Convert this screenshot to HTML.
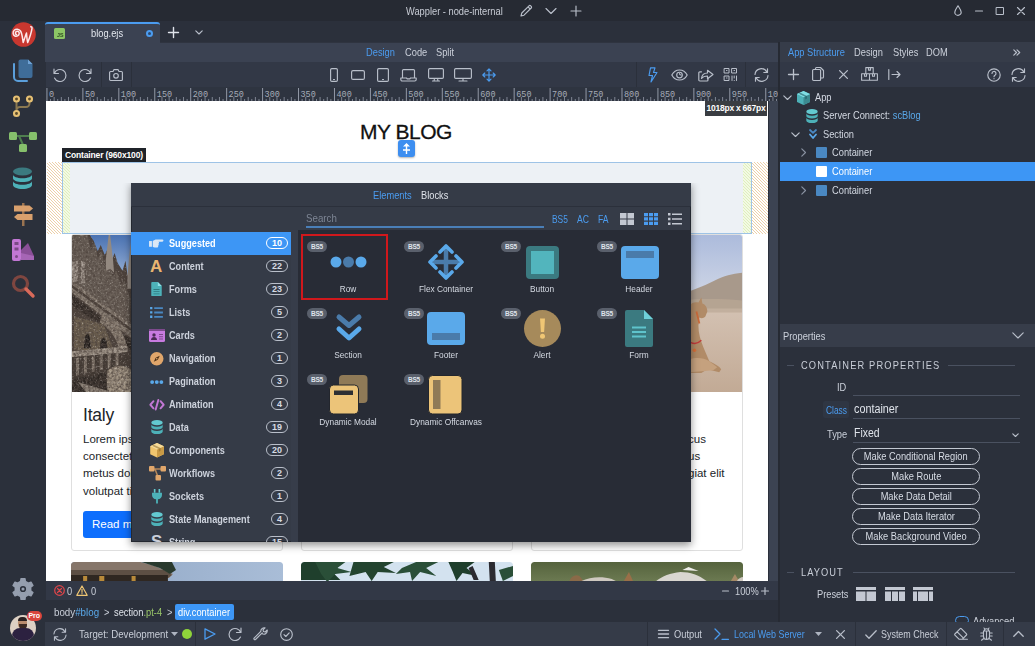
<!DOCTYPE html>
<html lang="en">
<head>
<meta charset="utf-8">
<title>Wappler - node-internal</title>
<style>
*{box-sizing:border-box;margin:0;padding:0}
html,body{width:1035px;height:646px;overflow:hidden;background:#2b303b}
body{position:relative;font-family:"Liberation Sans",sans-serif;font-size:10.500px;letter-spacing:0;color:#cbd0da}
.abs{position:absolute}
svg{display:block;overflow:visible}
.ic{position:absolute;fill:none;stroke:#b9bfca;stroke-width:1.150;stroke-linecap:round;stroke-linejoin:round}
.t{position:absolute;white-space:nowrap;line-height:14px;transform:scaleX(.885);transform-origin:0 50%}
/* frame */
#titlebar{left:0;top:0;width:1035px;height:21px;background:#262a33}
#sidebar{left:0;top:22px;width:45px;height:624px;background:#2b303b}
#tabbar{left:45px;top:22px;width:990px;height:20px;background:#2b303b}
#tab{z-index:1;left:45px;top:22px;width:115px;height:24px;background:#3b4252;border-top:2px solid #4b9cf0;border-radius:3px 3px 0 0}
#viewbar{left:45px;top:42px;width:734px;height:20px;background:#3b4252;border-top:1px solid #2f3440}
#toolbar{left:45px;top:62px;width:734px;height:25px;background:#323846}
#ruler{left:45px;top:87px;width:734px;height:14px;background:#2e3440;overflow:hidden}
#canvas{left:45px;top:101px;width:723px;height:480px;background:#fff;overflow:hidden}
#vscroll{left:768px;top:101px;width:10px;height:480px;background:#3c4352;border-left:1px solid #2b303b}
#split{left:778px;top:42px;width:2px;height:580px;background:#262a33}
#statusbar{left:45px;top:581px;width:734px;height:19px;background:#323846}
#crumbs{left:45px;top:600px;width:734px;height:22px;background:#2b303b}
#bottombar{left:45px;top:622px;width:990px;height:24px;background:#353b48}
#rtabs{left:780px;top:42px;width:255px;height:20px;background:#363c49}
#rtools{left:780px;top:62px;width:255px;height:25px;background:#323846}
#rtree{left:780px;top:87px;width:255px;height:238px;background:#2b303b}
#rprophead{left:780px;top:324px;width:255px;height:23px;background:#373d4a}
#rprops{left:780px;top:347px;width:255px;height:275px;background:#2b303b;overflow:hidden}

/* canvas */
#canvas{color:#212529;letter-spacing:0}
.card{position:absolute;width:212px;background:#fff;border:1px solid #dfdfdf;border-radius:3px;overflow:hidden}
.card .img{position:absolute;left:0;top:0;width:210px;height:157px}
.card h5{position:absolute;left:11px;top:170px;font-size:17.500px;font-weight:400;line-height:21px;letter-spacing:-.2px}
.card p{position:absolute;left:11px;top:196px;width:195px;font-size:11.500px;line-height:17.200px;color:#212529}
.card .btn{position:absolute;left:11px;top:276px;height:27px;padding:0 9px;border-radius:3px;background:#0d6efd;color:#fff;font-size:11.500px;line-height:27px}
.hatch-o{position:absolute;background:repeating-linear-gradient(45deg,#fff 0,#fff 1.400px,#edd0a8 1.400px,#edd0a8 2.100px)}
.hatch-g{position:absolute;background:repeating-linear-gradient(45deg,#f3f9e4 0,#f3f9e4 1.400px,#def0bd 1.400px,#def0bd 2.100px)}

/* popup */
#popup{left:131px;top:182px;width:560px;height:360px;background:#353b47;box-shadow:0 3px 8px rgba(0,0,0,.45);overflow:hidden;clip-path:inset(1px -20px -20px -20px);outline:1px solid #242830;outline-offset:-1px}
#popup .li{position:absolute;left:0;width:160px;height:23px}
#popup .li .lab{position:absolute;left:38px;top:3.500px;line-height:14px;font-weight:bold;color:#cdd2dc;white-space:nowrap;transform:scaleX(.87);transform-origin:0 50%}
#popup .li .bdg{position:absolute;right:3px;top:5px;height:12px;min-width:17px;padding:0 5px;border:1px solid #b9bfca;border-radius:6px;font-size:9px;line-height:10px;font-weight:bold;text-align:center;color:#d5dae3;letter-spacing:0}
#popup .li svg{position:absolute}
#popup .li.sel{background:#3d96f5}
#popup .li.sel .lab,#popup .li.sel .bdg{color:#fff;border-color:#fff}
.bs5{position:absolute;width:20px;height:11px;border-radius:6px;background:#5a606c;color:#dfe3ea;font-size:6.500px;line-height:11px;text-align:center;font-weight:bold;letter-spacing:-.2px}
.glab{position:absolute;width:98px;text-align:center;line-height:13px;color:#d5dae3;white-space:nowrap;font-size:9.500px;transform:scaleX(.875)}

/* right panel */
.tr{position:absolute;left:0;width:255px;height:19px}
.tr .t{top:2px;color:#d3d8e2}
.pbtn{position:absolute;left:72px;width:128px;height:17px;border:1px solid #c3c8d2;border-radius:9px;text-align:center;line-height:15px;color:#d8dde6;font-size:10.500px;white-space:nowrap}
.pbtn span{display:inline-block;transform:scaleX(.885)}
.hr{position:absolute;height:1px;background:#4a5160}
</style>
</head>
<body>
<div id="titlebar" class="abs">
<div class="t" style="left:406px;top:4px;color:#c9cdd6">Wappler - node-internal</div>
<svg class="ic" style="left:519px;top:4px" width="14" height="14" viewBox="0 0 14 14"><path d="M2 12l.8-3L10 1.8a1.2 1.2 0 0 1 1.7 0l.5.5a1.2 1.2 0 0 1 0 1.7L5 11.2z M9 2.8l2.2 2.2"/></svg>
<svg class="ic" style="left:545px;top:7px" width="12" height="8" viewBox="0 0 12 8"><path d="M1 1.5l5 5 5-5"/></svg>
<svg class="ic" style="left:570px;top:5px" width="12" height="12" viewBox="0 0 12 12"><path d="M6 1v10M1 6h10"/></svg>
<svg class="ic" style="left:954px;top:5px" width="8" height="11" viewBox="0 0 8 11"><path d="M4 .8C5.2 3 7.2 5 7.2 7.2a3.2 3.2 0 0 1-6.400 0C.8 5 2.800 3 4 .8z"/></svg>
<svg class="ic" style="left:975px;top:10px" width="8" height="2" viewBox="0 0 8 2"><path d="M.5 1h7"/></svg>
<svg class="ic" style="left:996px;top:7px;stroke-width:1" width="8" height="8" viewBox="0 0 8 8"><rect x=".5" y=".5" width="7" height="7"/></svg>
<svg class="ic" style="left:1017px;top:7px" width="8" height="8" viewBox="0 0 8 8"><path d="M.5.500l7 7M7.500.5l-7 7"/></svg>
</div>
<div id="sidebar" class="abs">
<!-- logo -->
<svg class="abs" style="left:11px;top:0" width="25" height="25" viewBox="0 0 25 25"><circle cx="12.500" cy="12.500" r="12.300" fill="#c8372f"/><path d="M5.500 12.500c-1.200-.3-1.500-2-.3-2.800 1.500-1 3.300.2 3 2-.3 2-2.500 3.200-4.300 2.300C1.800 13 1.500 10 3.200 8.300 5 6.600 8 7 9.500 9c1.500 2 2 7 2.700 11.500C13.500 17 14.500 13.500 15.500 11c.2 3 .5 7 1.200 9.500C18.500 16 20.500 10 21 6.300c.1-1-.5-1.800-1.200-1.600" fill="none" stroke="#fde8ea" stroke-width="1.500" stroke-linecap="round" stroke-linejoin="round"/></svg>
<!-- files -->
<svg class="abs" style="left:12px;top:37px" width="22" height="24" viewBox="0 0 22 24"><path d="M2 5v13a4 4 0 0 0 4 4h9" fill="none" stroke="#5b9fdb" stroke-width="2" stroke-linecap="round"/><path d="M6.500 2.500a2 2 0 0 1 2-2H16l4.500 4.500V17a2 2 0 0 1-2 2h-10a2 2 0 0 1-2-2z" fill="#3f6d99"/><path d="M16 .5l4.500 4.500H16z" fill="#6fa3d6"/></svg>
<!-- git -->
<svg class="abs" style="left:12px;top:72px" width="22" height="24" viewBox="0 0 22 24"><path d="M4.500 8v10M17.500 8v1.500a3.500 3.500 0 0 1-3.500 3.500H8a3.500 3.500 0 0 0-3.500 3.500" fill="none" stroke="#8b7850" stroke-width="2"/><circle cx="4.500" cy="5" r="2.500" fill="#5a4a2a" stroke="#e6c074" stroke-width="2.100"/><circle cx="17.500" cy="5" r="2.500" fill="#5a4a2a" stroke="#e6c074" stroke-width="2.100"/><circle cx="4.500" cy="19.500" r="2.500" fill="#5a4a2a" stroke="#e6c074" stroke-width="2.100"/></svg>
<!-- workflow -->
<svg class="abs" style="left:9px;top:108px" width="28" height="24" viewBox="0 0 28 24"><path d="M5 6h18M10 6l5 11" fill="none" stroke="#4f7f4f" stroke-width="2"/><rect x="0" y="2" width="8" height="8" rx="1.500" fill="#86c06c"/><rect x="20" y="2" width="8" height="8" rx="1.500" fill="#86c06c"/><rect x="10" y="14" width="8" height="8" rx="1.500" fill="#86c06c"/></svg>
<!-- database -->
<svg class="abs" style="left:12px;top:145px" width="21" height="23" viewBox="0 0 21 23"><ellipse cx="10.500" cy="4.500" rx="9.500" ry="4" fill="#3b7a80"/><path d="M1 7.500c0 2 4 3.800 9.500 3.800S20 9.500 20 7.500v3.800c0 2-4 3.800-9.500 3.800S1 13.300 1 11.300z" fill="#4db1b8"/><path d="M1 14c0 2 4 3.800 9.500 3.800S20 16 20 14v4c0 2-4 4-9.500 4S1 20 1 18z" fill="#4db1b8"/></svg>
<!-- signpost -->
<svg class="abs" style="left:12px;top:181px" width="23" height="23" viewBox="0 0 23 23"><rect x="10" y="0" width="2.500" height="23" fill="#9a7350"/><path d="M2 2.500h15.500L21 5.500l-3.500 3H2z" fill="#d9a06d"/><path d="M20.500 11h-15L2 14l3.500 3h15z" fill="#d9a06d"/></svg>
<!-- theme -->
<svg class="abs" style="left:11px;top:216px" width="24" height="24" viewBox="0 0 24 24"><path d="M10 12L17 5l6 13v4H10z" fill="#8a4f97"/><path d="M10 15l13 3v4H10z" fill="#a665b5"/><rect x="1" y="1" width="9" height="22" rx="2" fill="#c277d4"/><rect x="3.500" y="4" width="4" height="3" fill="#7a4a86"/><rect x="3.500" y="9.500" width="4" height="3" fill="#7a4a86"/><circle cx="5.500" cy="18.500" r="1.500" fill="#7a4a86"/></svg>
<!-- search -->
<svg class="abs" style="left:11px;top:252px" width="24" height="24" viewBox="0 0 24 24"><circle cx="9.500" cy="9.500" r="7" fill="none" stroke="#7f4640" stroke-width="3.200"/><path d="M15 15l7 7" stroke="#d96a5a" stroke-width="3.400" stroke-linecap="round"/></svg>
<!-- gear -->
<svg class="abs" style="left:12px;top:556px" width="22" height="22" viewBox="0 0 24 24"><path fill="#959eae" stroke="#959eae" stroke-width="1.600" stroke-linejoin="round" fill-rule="evenodd" d="M9.46 3.78L9.87 0.70L14.13 0.70L14.54 3.78L17.84 5.69L20.72 4.51L22.85 8.19L20.39 10.09L20.39 13.91L22.85 15.81L20.72 19.49L17.84 18.31L14.54 20.22L14.13 23.30L9.87 23.30L9.46 20.22L6.16 18.31L3.28 19.49L1.15 15.81L3.61 13.91L3.61 10.09L1.15 8.19L3.28 4.51L6.16 5.69zM12 7.800a4.200 4.200 0 1 0 0 8.400 4.200 4.200 0 0 0 0-8.400z"/><circle cx="12" cy="12" r="1.700" fill="#959eae"/></svg>
<!-- avatar -->
<div class="abs" style="left:10px;top:593px;width:26px;height:26px;border-radius:13px;background:#ddd0c4;overflow:hidden">
<div class="abs" style="left:8px;top:3px;width:9px;height:11px;border-radius:4.500px;background:#b98c6e"></div>
<div class="abs" style="left:8px;top:2px;width:9px;height:4px;border-radius:4px 4px 0 0;background:#2a2020"></div>
<div class="abs" style="left:8.500px;top:9px;width:8px;height:5px;border-radius:0 0 4px 4px;background:#3a2a24"></div>
<div class="abs" style="left:2px;top:13px;width:22px;height:14px;border-radius:8px 8px 0 0;background:#2c2140"></div>
</div>
<div class="abs" style="left:27px;top:589px;width:14.500px;height:10px;border-radius:5px;background:#d9453c;color:#fff;font-size:7px;line-height:10px;text-align:center;font-weight:bold">Pro</div>
</div>
<div id="tabbar" class="abs"></div>
<div id="tab" class="abs">
<div class="abs" style="left:9px;top:4px;width:11px;height:11px;border-radius:1.500px;background:#8cc665"></div>
<div class="t" style="left:12px;top:8px;font-size:6px;line-height:7px;color:#2d4a1f;font-weight:bold">JS</div>
<div class="t" style="left:46px;top:2px;color:#e3e7ee">blog.ejs</div>
<div class="abs" style="left:100.500px;top:5.500px;width:7px;height:7px;border-radius:4px;border:2px solid #4b9cf0;background:#2d4a70"></div>
</div>
<svg class="ic" style="left:168px;top:27px;stroke:#dfe3ea;stroke-width:1.400" width="11" height="11" viewBox="0 0 11 11"><path d="M5.500.5v10M.5 5.500h10"/></svg>
<svg class="ic" style="left:195px;top:30px" width="8" height="5" viewBox="0 0 8 5"><path d="M.8.800l3.200 3.200 3.200-3.200"/></svg>
<div id="viewbar" class="abs">
<div class="t" style="left:321px;top:2px;color:#4b9cf0">Design</div>
<div class="t" style="left:360px;top:2px">Code</div>
<div class="t" style="left:391px;top:2px">Split</div>
</div>
<div id="toolbar" class="abs">
<div class="abs" style="left:56px;top:0;width:1px;height:25px;background:#2b303b"></div>
<div class="abs" style="left:86px;top:0;width:1px;height:25px;background:#2b303b"></div>
<div class="abs" style="left:591px;top:0;width:1px;height:25px;background:#2b303b"></div>
<div class="abs" style="left:700px;top:0;width:1px;height:25px;background:#2b303b"></div>
<!-- undo -->
<svg class="ic" style="left:8px;top:6px" width="14" height="14" viewBox="0 0 14 14"><path d="M1 1v4.500h4.500M1.300 5.500A6 6 0 1 1 1.500 10"/></svg>
<!-- redo -->
<svg class="ic" style="left:33px;top:6px" width="14" height="14" viewBox="0 0 14 14"><path d="M13 1v4.500H8.500M12.700 5.500A6 6 0 1 0 12.500 10"/></svg>
<!-- camera -->
<svg class="ic" style="left:64px;top:7px" width="14" height="12" viewBox="0 0 14 12"><path d="M.6 3.500a1 1 0 0 1 1-1H4l1-1.900h4l1 1.900h2.400a1 1 0 0 1 1 1v7a1 1 0 0 1-1 1H1.600a1 1 0 0 1-1-1z"/><circle cx="7" cy="6.800" r="2.300"/></svg>
<!-- phone -->
<svg class="ic" style="left:285px;top:6px" width="8" height="14" viewBox="0 0 8 14"><rect x=".6" y=".6" width="6.800" height="12.800" rx="1.200"/><path d="M3.500 11.500h1"/></svg>
<!-- phone landscape -->
<svg class="ic" style="left:306px;top:8px" width="14" height="10" viewBox="0 0 14 10"><rect x=".6" y=".6" width="12.800" height="8.800" rx="1.500"/></svg>
<!-- tablet -->
<svg class="ic" style="left:332px;top:6px" width="12" height="14" viewBox="0 0 12 14"><rect x=".6" y=".6" width="10.800" height="12.800" rx="1.200"/><path d="M5.500 11.500h1"/></svg>
<!-- laptop -->
<svg class="ic" style="left:355px;top:7px" width="17" height="13" viewBox="0 0 17 13"><path d="M2.500 9V1.600a1 1 0 0 1 1-1h10a1 1 0 0 1 1 1V9M.8 9h5.700l.7.800h2.600l.7-.800h5.700v1.500a1.500 1.500 0 0 1-1.500 1.500H2.300A1.500 1.500 0 0 1 .8 10.500z"/></svg>
<!-- desktop -->
<svg class="ic" style="left:383px;top:6px" width="16" height="14" viewBox="0 0 16 14"><rect x=".6" y=".6" width="14.800" height="9.800" rx="1.200"/><path d="M6.500 10.500l-.5 2.500M9.500 10.500l.5 2.500M4.500 13h7"/></svg>
<!-- wide -->
<svg class="ic" style="left:409px;top:6px" width="18" height="14" viewBox="0 0 18 14"><rect x=".6" y=".6" width="16.800" height="9.800" rx="1.200"/><path d="M9 10.500V13M5 13h8"/></svg>
<!-- move -->
<svg class="ic" style="left:437px;top:6px;stroke:#4b9cf0" width="14" height="14" viewBox="0 0 14 14"><path d="M7 .8v12.400M.8 7h12.400M5 2.800l2-2 2 2M5 11.200l2 2 2-2M2.800 5l-2 2 2 2M11.200 5l2 2-2 2"/></svg>
<!-- bolt -->
<svg class="ic" style="left:603px;top:5px;stroke:#4b9cf0" width="10" height="16" viewBox="0 0 10 16"><path d="M2.500.8h4.500L5.500 5.500h3.500L3 15l1.500-6.500H1z"/></svg>
<!-- eye -->
<svg class="ic" style="left:626px;top:7px" width="17" height="12" viewBox="0 0 17 12"><path d="M.8 6C2.500 2.800 5.200 1 8.500 1s6 1.800 7.700 5c-1.700 3.200-4.400 5-7.700 5S2.500 9.200.8 6z"/><circle cx="8.500" cy="6" r="2.800"/><path d="M8.500 4.500a1.500 1.500 0 0 0 1.500 1.500"/></svg>
<!-- share -->
<svg class="ic" style="left:653px;top:6px" width="16" height="14" viewBox="0 0 16 14"><path d="M10 10.500v1.500a1 1 0 0 1-1 1H1.800a1 1 0 0 1-1-1V4.800a1 1 0 0 1 1-1H3.500"/><path d="M3.500 10.500C3.800 7 6 5 9.500 5V2.200L15 6.500l-5.500 4.300V8C7 8 5 8.500 3.500 10.500z"/></svg>
<!-- qr -->
<svg class="ic" style="left:679px;top:6px;stroke-width:1" width="13" height="13" viewBox="0 0 13 13"><rect x=".5" y=".5" width="4.500" height="4.500"/><rect x="8" y=".5" width="4.500" height="4.500"/><rect x=".5" y="8" width="4.500" height="4.500"/><path d="M2.500 2.500h.5M10 2.500h.5M2.500 10h.5M8 8v4.500M10.200 8v2M12.500 8v4.500M10.200 12.500h.100"/></svg>
<!-- refresh -->
<svg class="ic" style="left:709px;top:6px" width="15" height="14" viewBox="0 0 15 14"><path d="M1 6.500A6.300 6.300 0 0 1 12.800 4M13.500.8V4.500H9.800M14 7.500A6.300 6.300 0 0 1 2.200 10M1.500 13.200V9.500h3.700"/></svg>
</div>
<div id="ruler" class="abs">
<svg class="abs" style="left:0;top:0" width="734" height="14" viewBox="0 0 734 14">
<path d="M1.95 1v13M37.89 1v13M73.83 1v13M109.77 1v13M145.71 1v13M181.65 1v13M217.59 1v13M253.53 1v13M289.47 1v13M325.41 1v13M361.35 1v13M397.29 1v13M433.23 1v13M469.17 1v13M505.11 1v13M541.05 1v13M576.99 1v13M612.93 1v13M648.87 1v13M684.81 1v13M720.75 1v13" stroke="#9399a6" stroke-width="1" fill="none"/>
<path d="M5.54 12v2M9.14 10v4M12.73 12v2M16.33 10v4M19.92 12v2M23.51 10v4M27.11 12v2M30.70 10v4M34.30 12v2M41.48 12v2M45.08 10v4M48.67 12v2M52.27 10v4M55.86 12v2M59.45 10v4M63.05 12v2M66.64 10v4M70.24 12v2M77.42 12v2M81.02 10v4M84.61 12v2M88.21 10v4M91.80 12v2M95.39 10v4M98.99 12v2M102.58 10v4M106.18 12v2M113.36 12v2M116.96 10v4M120.55 12v2M124.15 10v4M127.74 12v2M131.33 10v4M134.93 12v2M138.52 10v4M142.12 12v2M149.30 12v2M152.90 10v4M156.49 12v2M160.09 10v4M163.68 12v2M167.27 10v4M170.87 12v2M174.46 10v4M178.06 12v2M185.24 12v2M188.84 10v4M192.43 12v2M196.03 10v4M199.62 12v2M203.21 10v4M206.81 12v2M210.40 10v4M214.00 12v2M221.18 12v2M224.78 10v4M228.37 12v2M231.97 10v4M235.56 12v2M239.15 10v4M242.75 12v2M246.34 10v4M249.94 12v2M257.12 12v2M260.72 10v4M264.31 12v2M267.91 10v4M271.50 12v2M275.09 10v4M278.69 12v2M282.28 10v4M285.88 12v2M293.06 12v2M296.66 10v4M300.25 12v2M303.85 10v4M307.44 12v2M311.03 10v4M314.63 12v2M318.22 10v4M321.82 12v2M329.00 12v2M332.60 10v4M336.19 12v2M339.79 10v4M343.38 12v2M346.97 10v4M350.57 12v2M354.16 10v4M357.76 12v2M364.94 12v2M368.54 10v4M372.13 12v2M375.73 10v4M379.32 12v2M382.91 10v4M386.51 12v2M390.10 10v4M393.70 12v2M400.88 12v2M404.48 10v4M408.07 12v2M411.67 10v4M415.26 12v2M418.85 10v4M422.45 12v2M426.04 10v4M429.64 12v2M436.82 12v2M440.42 10v4M444.01 12v2M447.61 10v4M451.20 12v2M454.79 10v4M458.39 12v2M461.98 10v4M465.58 12v2M472.76 12v2M476.36 10v4M479.95 12v2M483.55 10v4M487.14 12v2M490.73 10v4M494.33 12v2M497.92 10v4M501.52 12v2M508.70 12v2M512.30 10v4M515.89 12v2M519.49 10v4M523.08 12v2M526.67 10v4M530.27 12v2M533.86 10v4M537.46 12v2M544.64 12v2M548.24 10v4M551.83 12v2M555.43 10v4M559.02 12v2M562.61 10v4M566.21 12v2M569.80 10v4M573.40 12v2M580.58 12v2M584.18 10v4M587.77 12v2M591.37 10v4M594.96 12v2M598.55 10v4M602.15 12v2M605.74 10v4M609.34 12v2M616.52 12v2M620.12 10v4M623.71 12v2M627.31 10v4M630.90 12v2M634.49 10v4M638.09 12v2M641.68 10v4M645.28 12v2M652.46 12v2M656.06 10v4M659.65 12v2M663.25 10v4M666.84 12v2M670.43 10v4M674.03 12v2M677.62 10v4M681.22 12v2M688.40 12v2M692.00 10v4M695.59 12v2M699.19 10v4M702.78 12v2M706.37 10v4M709.97 12v2M713.56 10v4M717.16 12v2M724.34 12v2M727.94 10v4M731.53 12v2" stroke="#7f8592" stroke-width="1" fill="none"/>
<text x="4.0" y="9.500" font-family="Liberation Mono,monospace" font-size="8.500" letter-spacing="0" fill="#a5abb6">0</text>
<text x="39.9" y="9.500" font-family="Liberation Mono,monospace" font-size="8.500" letter-spacing="0" fill="#a5abb6">50</text>
<text x="75.8" y="9.500" font-family="Liberation Mono,monospace" font-size="8.500" letter-spacing="0" fill="#a5abb6">100</text>
<text x="111.8" y="9.500" font-family="Liberation Mono,monospace" font-size="8.500" letter-spacing="0" fill="#a5abb6">150</text>
<text x="147.7" y="9.500" font-family="Liberation Mono,monospace" font-size="8.500" letter-spacing="0" fill="#a5abb6">200</text>
<text x="183.6" y="9.500" font-family="Liberation Mono,monospace" font-size="8.500" letter-spacing="0" fill="#a5abb6">250</text>
<text x="219.6" y="9.500" font-family="Liberation Mono,monospace" font-size="8.500" letter-spacing="0" fill="#a5abb6">300</text>
<text x="255.5" y="9.500" font-family="Liberation Mono,monospace" font-size="8.500" letter-spacing="0" fill="#a5abb6">350</text>
<text x="291.5" y="9.500" font-family="Liberation Mono,monospace" font-size="8.500" letter-spacing="0" fill="#a5abb6">400</text>
<text x="327.4" y="9.500" font-family="Liberation Mono,monospace" font-size="8.500" letter-spacing="0" fill="#a5abb6">450</text>
<text x="363.3" y="9.500" font-family="Liberation Mono,monospace" font-size="8.500" letter-spacing="0" fill="#a5abb6">500</text>
<text x="399.3" y="9.500" font-family="Liberation Mono,monospace" font-size="8.500" letter-spacing="0" fill="#a5abb6">550</text>
<text x="435.2" y="9.500" font-family="Liberation Mono,monospace" font-size="8.500" letter-spacing="0" fill="#a5abb6">600</text>
<text x="471.2" y="9.500" font-family="Liberation Mono,monospace" font-size="8.500" letter-spacing="0" fill="#a5abb6">650</text>
<text x="507.1" y="9.500" font-family="Liberation Mono,monospace" font-size="8.500" letter-spacing="0" fill="#a5abb6">700</text>
<text x="543.1" y="9.500" font-family="Liberation Mono,monospace" font-size="8.500" letter-spacing="0" fill="#a5abb6">750</text>
<text x="579.0" y="9.500" font-family="Liberation Mono,monospace" font-size="8.500" letter-spacing="0" fill="#a5abb6">800</text>
<text x="614.9" y="9.500" font-family="Liberation Mono,monospace" font-size="8.500" letter-spacing="0" fill="#a5abb6">850</text>
<text x="650.9" y="9.500" font-family="Liberation Mono,monospace" font-size="8.500" letter-spacing="0" fill="#a5abb6">900</text>
<text x="686.8" y="9.500" font-family="Liberation Mono,monospace" font-size="8.500" letter-spacing="0" fill="#a5abb6">950</text>
<text x="722.8" y="9.500" font-family="Liberation Mono,monospace" font-size="8.500" letter-spacing="0" fill="#a5abb6">1000</text>
</svg></div>
<div id="canvas" class="abs">
<div class="t" style="transform:none;left:315px;top:19px;font-size:21px;line-height:24px;letter-spacing:-.5px;color:#111;-webkit-text-stroke:.3px #111">MY BLOG</div>
<!-- selected container -->
<div class="hatch-o" style="left:2px;top:61px;width:15px;height:72px"></div>
<div class="hatch-o" style="left:707px;top:61px;width:16px;height:72px"></div>
<div class="abs" style="left:17px;top:61px;width:690px;height:72px;background:#edf1f5;border:1px solid #9ec3e6"></div>
<div class="hatch-g" style="left:18px;top:62px;width:7px;height:70px"></div>
<div class="hatch-g" style="left:698px;top:62px;width:8px;height:70px"></div>
<div class="abs" style="left:17px;top:47px;width:84px;height:14px;background:#1f2329;color:#fff;font-weight:bold;font-size:8.500px;line-height:14px;letter-spacing:-.15px;padding-left:3px;white-space:nowrap">Container (960x100)</div>
<div class="abs" style="left:353px;top:39px;width:17px;height:17px;border-radius:3px;background:#3d8ef0;box-shadow:0 1px 2px rgba(0,0,0,.3)"><svg class="abs" style="left:4px;top:3px" width="9" height="11" viewBox="0 0 9 11"><path d="M4.500 0L8 3.500H1zM3.800 3h1.400v8H3.800zM1 6.300h7v1.400H1z" fill="#fff"/></svg></div>
<div class="abs" style="left:660px;top:0;width:62px;height:15px;background:#3a3d42;color:#fff;font-weight:bold;font-size:8.500px;line-height:15px;letter-spacing:-.25px;text-align:center;white-space:nowrap">1018px x 667px</div>
<!-- cards row 1 -->
<div class="card" style="left:26px;top:133px;height:317px">
<svg class="img" viewBox="0 0 212 158" preserveAspectRatio="none"><defs><linearGradient id="sky1" x1="0" y1="0" x2="0" y2="1"><stop offset="0" stop-color="#4a72b2"/><stop offset="1" stop-color="#a3bbdd"/></linearGradient><filter id="nz" x="0" y="0" width="100%" height="100%"><feTurbulence type="fractalNoise" baseFrequency=".42" numOctaves="2" seed="7"/><feColorMatrix values="0 0 0 0 .08  0 0 0 0 .06  0 0 0 0 .05  0 0 0 1.700 -.5"/></filter><filter id="nl" x="0" y="0" width="100%" height="100%"><feTurbulence type="fractalNoise" baseFrequency=".5" numOctaves="2" seed="3"/><feColorMatrix values="0 0 0 0 .85  0 0 0 0 .8  0 0 0 0 .74  0 0 0 1.200 -.68"/></filter></defs>
<rect width="212" height="158" fill="#4a403a"/>
<path d="M0 0h16l3 16 4-10 3 18 4-8 3 16 4-6 4 16 4-6 4 14 4-4 5 16v30L0 50z" fill="#6a6058"/>
<path d="M0 28l6-2v20l-6 2zM9 26l4 1v22l-4-1z" fill="#a39990"/>
<path d="M0 46l60 44v14L0 58z" fill="#8a7f74"/>
<path d="M0 50l60 44v3L0 53z" fill="#4a4039"/>
<path d="M0 60l60 46v10L40 96 0 72z" fill="#2f2824"/>
<path d="M2 82l30 8 10 26H2z" fill="#6d604f"/>
<path d="M30 80c14 6 24 18 26 36l-8 2c-2-14-10-24-20-30z" fill="#8a7e72"/>
<path d="M13 102l3-3 2 3 1 12h-7zM29 106l3-3 3 4 1 9h-8z" fill="#1f1b19"/>
<path d="M0 117l56-5v6L0 123z" fill="#a09589"/>
<path d="M0 123l56-5v18L0 146z" fill="#3f3731"/>
<path d="M4 124l3-1v18l-3 1zM12 123l3-1v17l-3 1zM20 122l3-1v16l-3 1zM28 121l3-1v15l-3 1zM36 120l3-1v14l-3 1zM44 119l3-1v13l-3 1z" fill="#8a7f74"/>
<path d="M36 136c8-6 18-6 24 0v22H34z" fill="#a29584"/>
<path d="M0 146l34-8 2 20H0z" fill="#2c2622"/>
<path d="M6 148l34 10H14z" fill="#8e8479"/>
<rect width="62" height="158" filter="url(#nz)"/>
<rect width="62" height="158" filter="url(#nl)"/>
<path d="M18 0h44v48l-6-8-2-14-3 10-5-8-3-10-3 8-4-12-3 6-4-10-3 6-4-10z" fill="url(#sky1)"/>
<path d="M34 26l3-26h1.500l3 26 1 12-4-4-4 2z" fill="#938980"/>
<path d="M56 40l3-32 2 32v14h-5z" fill="#938980"/>
<rect x="60" y="0" width="152" height="158" fill="#6a5f56"/>
</svg>
<h5>Italy</h5>
<p>Lorem ipsum dolor sit amet,<br>consectetur adipiscing elit. Sed<br>metus dolor, lacinia sed lacus<br>volutpat tincidunt.</p>
<div class="btn">Read more</div>
</div>
<div class="card" style="left:256px;top:133px;height:317px"></div>
<div class="card" style="left:486px;top:133px;height:317px">
<svg class="img" viewBox="0 0 212 158" preserveAspectRatio="none"><defs><linearGradient id="sky3" x1="0" y1="0" x2="0" y2="1"><stop offset="0" stop-color="#acbbdc"/><stop offset="1" stop-color="#cfd6e6"/></linearGradient><linearGradient id="snd" x1="0" y1="0" x2="0" y2="1"><stop offset="0" stop-color="#d6c5b7"/><stop offset="1" stop-color="#c2aa95"/></linearGradient></defs>
<rect width="212" height="62" fill="url(#sky3)"/>
<rect y="60" width="212" height="98" fill="url(#snd)"/>
<path d="M150 60c10-4 22-8 34-14 10-5 18-7 28-8v36h-62z" fill="#a8998b"/>
<path d="M150 66c20-2 40-2 62 0v12h-62z" fill="#bba896" opacity=".7"/>
<g transform="translate(0,7)"><path d="M159 64c2-3 6-4 9-3l3-5 1 6c3 1 5 4 5 8l-2 5c-2 2-4 2-6 1l-1 8c0 8 2 14 5 22l6 14c6 3 10 5 12 8l-2 3-12-3-6 4h-12z" fill="#b18b67"/>
<path d="M159 118c6-2 14-2 20 2l8 6-4 3-24 2z" fill="#c5a17e"/>
<path d="M166 70l3 12" stroke="#c96a3a" stroke-width="1.800" fill="none"/><path d="M160 101c4 2 8 1 11-2" stroke="#c23a3a" stroke-width="1.400" fill="none"/><circle cx="164" cy="109" r="1.800" fill="#d9703a"/></g>
</svg>
<div class="t" style="transform:none;left:156px;top:196px;font-size:11.500px;line-height:17.200px;color:#212529">cus<br>us<br>giat elit</div>
</div>
<!-- row 2 -->
<div class="card" style="left:26px;top:461px;height:100px;border:0"><svg class="img" style="width:212px" viewBox="0 0 210 157" preserveAspectRatio="none"><defs><linearGradient id="sk4" x1="0" y1="0" x2="1" y2="0"><stop offset="0" stop-color="#8fa6c5"/><stop offset="1" stop-color="#a9bdd7"/></linearGradient></defs><rect width="210" height="157" rx="3" fill="url(#sk4)"/><path d="M0 3a3 3 0 0 1 3-3h66l14 4 18 8-4 4H0z" fill="#86766a"/><path d="M0 8h92l8 5-4 3H0z" fill="#5d4f44"/><path d="M0 13h96v6H0z" fill="#2f2721"/><path d="M70 0h30l4 8-6 4-10-6z" fill="#2a3a2e"/><path d="M12 14h4v5h-4zM28 14h5v5h-5zM60 14h4v5h-4z" fill="#b98a3a"/></svg></div>
<div class="card" style="left:256px;top:461px;height:100px;border:0"><svg class="img" style="width:212px" viewBox="0 0 210 157" preserveAspectRatio="none"><rect width="210" height="157" rx="3" fill="#d3e2ef"/><path d="M0 3a3 3 0 0 1 3-3h22l12 6-6 4 8 8H0z" fill="#1f3f2c"/><path d="M14 0h30l-8 6 14 4-16 2-8 8-6-8z" fill="#2a4f38"/><path d="M52 0h40l-10 5 12 6-18-1-6 9-6-9-16 4z" fill="#23442f"/><path d="M100 6l14-6h22l-12 6 10 8-16-4-8 9-2-9-14 2z" fill="#2a4f38"/><path d="M146 0h26l-8 6 10 8-14-3-6 8-4-10z" fill="#1f3f2c"/><path d="M170 4l6 14h-5l-5-12zM186 0h6l1 19h-6z" fill="#2b2a30"/><path d="M196 8l14-4v10l-10 5z" fill="#2a4f38"/></svg></div>
<div class="card" style="left:486px;top:461px;height:100px;border:0"><svg class="img" style="width:212px" viewBox="0 0 210 157" preserveAspectRatio="none"><defs><linearGradient id="gr6" x1="0" y1="0" x2="0" y2="1"><stop offset="0" stop-color="#55633d"/><stop offset=".12" stop-color="#6b7951"/><stop offset="1" stop-color="#6b7951"/></linearGradient></defs><rect width="210" height="157" rx="3" fill="url(#gr6)"/><path d="M38 19c2-5 6-7 10-5l4 5z" fill="#8a6a48"/><path d="M50 19c8-4 20-5 30-2l4 2z" fill="#cfc9c0"/><path d="M92 19l5-9 4 9z" fill="#9a6f48"/><path d="M124 19c6-5 14-8 24-9 10 0 18 3 26 9z" fill="#d9d6d0"/><path d="M150 8l6-3 10 4z" fill="#efeeea"/><path d="M198 19l4-7 4 7z" fill="#a58a66"/><path d="M204 19c2-3 4-4 6-4v4z" fill="#cfc9c0"/></svg></div>
</div>
<div id="vscroll" class="abs"></div>
<div id="statusbar" class="abs">
<svg class="abs" style="left:9px;top:4px" width="11" height="11" viewBox="0 0 11 11"><circle cx="5.500" cy="5.500" r="4.800" fill="none" stroke="#e0454a" stroke-width="1.200"/><path d="M3.500 3.500l4 4M7.500 3.500l-4 4" stroke="#e0454a" stroke-width="1.200" stroke-linecap="round"/></svg>
<div class="t" style="left:22px;top:3px;color:#c9ced8">0</div>
<svg class="abs" style="left:31px;top:4px" width="12" height="11" viewBox="0 0 12 11"><path d="M6 1l5.200 9.300H.8z" fill="none" stroke="#f0c674" stroke-width="1.200" stroke-linejoin="round"/><path d="M6 4.300v3M6 8.600v.2" stroke="#f0c674" stroke-width="1.200" stroke-linecap="round"/></svg>
<div class="t" style="left:46px;top:3px;color:#c9ced8">0</div>
<svg class="ic" style="left:677px;top:9px" width="7" height="2" viewBox="0 0 7 2"><path d="M.5 1h6"/></svg>
<div class="t" style="left:690px;top:3px;color:#c9ced8">100%</div>
<svg class="ic" style="left:716px;top:6px" width="8" height="8" viewBox="0 0 8 8"><path d="M4 .5v7M.5 4h7"/></svg>
</div>
<div id="crumbs" class="abs">
<div class="t" style="left:9px;top:5px;color:#c9ced8;transform:scaleX(.93)">body<span style="color:#5aa9ea">#blog</span></div>
<div class="t" style="left:59px;top:5px;color:#c9ced8">&gt;</div>
<div class="t" style="left:69px;top:5px;color:#dfe3ea">section<span style="color:#9bc86a">.pt-4</span></div>
<div class="t" style="left:122px;top:5px;color:#c9ced8">&gt;</div>
<div class="abs" style="left:130px;top:4px;width:59px;height:16px;border-radius:2px;background:#3d96f5"></div>
<div class="t" style="left:133px;top:5px;color:#fff">div.container</div>
</div>
<div id="rtabs" class="abs">
<div class="t" style="left:8px;top:3px;color:#4b9cf0">App Structure</div>
<div class="t" style="left:74px;top:3px">Design</div>
<div class="t" style="left:113px;top:3px">Styles</div>
<div class="t" style="left:146px;top:3px">DOM</div>
<svg class="ic" style="left:233px;top:7px" width="7" height="7" viewBox="0 0 7 7"><path d="M.8.800L3.500 3.500.8 6.200M4 .8l2.700 2.700L4 6.200"/></svg>
</div>
<div id="rtools" class="abs">
<svg class="ic" style="left:8px;top:7px;stroke-width:1.300" width="11" height="11" viewBox="0 0 11 11"><path d="M5.500.5v10M.5 5.500h10"/></svg>
<svg class="ic" style="left:32px;top:5px" width="12" height="14" viewBox="0 0 12 14"><path d="M3.500 2.500v-1a1 1 0 0 1 1-1H8.500l3 3V10a1 1 0 0 1-1 1H8.500M.6 3.500a1 1 0 0 1 1-1h6a1 1 0 0 1 1 1v9a1 1 0 0 1-1 1h-6a1 1 0 0 1-1-1z"/></svg>
<svg class="ic" style="left:59px;top:8px;stroke-width:1.300" width="9" height="9" viewBox="0 0 9 9"><path d="M.6.600l7.800 7.800M8.400.6L.6 8.400"/></svg>
<svg class="ic" style="left:81px;top:5px;stroke-width:1.100" width="17" height="14" viewBox="0 0 17 14"><path d="M4.800.6h7.400v6.200H4.800zM.6 6.800h7.900v6.400H.6zM8.500 6.800h7.900v6.400H8.500zM7.500.6v2.500h2V.6M3.500 6.800v2.400h2V6.800M11.500 6.800v2.400h2V6.800"/></svg>
<svg class="ic" style="left:108px;top:7px" width="13" height="11" viewBox="0 0 13 11"><path d="M.8.600v9.800M4 5.500h8M9 2.500l3 3-3 3"/></svg>
<svg class="ic" style="left:207px;top:6px" width="14" height="14" viewBox="0 0 14 14"><circle cx="7" cy="7" r="6.200"/><path d="M5 5.500a2 2 0 1 1 3 1.700c-.7.400-1 .8-1 1.500M7 10.600v.1"/></svg>
<svg class="ic" style="left:231px;top:6px" width="15" height="14" viewBox="0 0 15 14"><path d="M1 6.500A6.300 6.300 0 0 1 12.800 4M13.500.8V4.500H9.800M14 7.500A6.300 6.300 0 0 1 2.200 10M1.500 13.200V9.500h3.700"/></svg>
</div>
<div id="rtree" class="abs">
<div class="tr" style="top:1px"><svg class="ic" style="left:3px;top:7px" width="9" height="6" viewBox="0 0 9 6"><path d="M.8.800l3.700 3.700L8.200.8"/></svg><svg class="abs" style="left:17px;top:3px" width="13" height="14" viewBox="0 0 15 16"><path d="M7.500 0L15 3.500v9L7.500 16 0 12.500v-9z" fill="#4db1b8"/><path d="M7.500 7.200L15 3.500v9L7.500 16z" fill="#3b8a90"/><path d="M7.500 0L15 3.500 7.500 7.200 0 3.500z" fill="#7fdde3"/><path d="M4 2l7.500 3.600v3l-2 1V6.700L2 3z" fill="#1f5a60" opacity=".6"/></svg><div class="t" style="left:35px">App</div></div>
<div class="tr" style="top:19px"><svg class="abs" style="left:26px;top:3px" width="12" height="14" viewBox="0 0 13 16"><ellipse cx="6.500" cy="3" rx="6.500" ry="3" fill="#63c9d0"/><path d="M0 4.800c0 1.500 2.800 2.800 6.500 2.800S13 6.300 13 4.800V8c0 1.500-2.800 2.800-6.500 2.800S0 9.500 0 8z" fill="#4db1b8"/><path d="M0 9.800c0 1.500 2.800 2.800 6.500 2.800S13 11.300 13 9.800V13c0 1.600-2.800 3-6.500 3S0 14.600 0 13z" fill="#4db1b8"/></svg><div class="t" style="left:43px">Server Connect: <span style="color:#5aa9ea">scBlog</span></div></div>
<div class="tr" style="top:38px"><svg class="ic" style="left:11px;top:7px" width="9" height="6" viewBox="0 0 9 6"><path d="M.8.800l3.700 3.700L8.200.8"/></svg><svg class="abs" style="left:29px;top:4px" width="8" height="11" viewBox="0 0 8 11"><path d="M1 1l3 2.800L7 1" fill="none" stroke="#4a88c2" stroke-width="1.800" stroke-linecap="round" stroke-linejoin="round"/><path d="M1 5.500l3 3.500 3-3.500" fill="none" stroke="#5aa9ea" stroke-width="1.800" stroke-linecap="round" stroke-linejoin="round"/></svg><div class="t" style="left:43px">Section</div></div>
<div class="tr" style="top:56px"><svg class="ic" style="left:21px;top:5px;stroke:#8a92a2" width="6" height="9" viewBox="0 0 6 9"><path d="M.8.800l3.700 3.700L.8 8.200"/></svg><div class="abs" style="left:36px;top:4px;width:11px;height:11px;border-radius:1px;background:#4a88c2"></div><div class="t" style="left:52px">Container</div></div>
<div class="tr" style="top:75px;background:#3d96f5"><div class="abs" style="left:36px;top:4px;width:11px;height:11px;border-radius:1px;background:#fff"></div><div class="t" style="left:52px;color:#fff">Container</div></div>
<div class="tr" style="top:94px"><svg class="ic" style="left:21px;top:5px;stroke:#8a92a2" width="6" height="9" viewBox="0 0 6 9"><path d="M.8.800l3.700 3.700L.8 8.200"/></svg><div class="abs" style="left:36px;top:4px;width:11px;height:11px;border-radius:1px;background:#4a88c2"></div><div class="t" style="left:52px">Container</div></div>
</div>
<div id="rprophead" class="abs">
<div class="t" style="left:3px;top:5px">Properties</div>
<svg class="ic" style="left:232px;top:8px" width="12" height="7" viewBox="0 0 12 7"><path d="M.8.800L6 6 11.200.8"/></svg>
</div>
<div id="rprops" class="abs">
<div class="hr" style="left:7px;top:18px;width:7px"></div>
<div class="t" style="left:21px;top:11px;font-size:10.500px;letter-spacing:1.300px;color:#c9ced8">CONTAINER PROPERTIES</div>
<div class="hr" style="left:168px;top:18px;width:67px"></div>
<div class="t" style="left:57px;top:33px">ID</div>
<div class="hr" style="left:73px;top:48px;width:167px"></div>
<div class="abs" style="left:43px;top:54px;width:26px;height:17px;border-radius:2px;background:#2f3643"></div>
<div class="t" style="left:46px;top:56px;color:#4b9cf0;transform:scaleX(.8)">Class</div>
<div class="t" style="left:74px;top:55px;font-size:12px;transform:scaleX(.9);color:#dfe3ea">container</div>
<div class="hr" style="left:73px;top:71px;width:167px"></div>
<div class="t" style="left:47px;top:80px">Type</div>
<div class="t" style="left:74px;top:79px;font-size:12px;transform:scaleX(.87);color:#dfe3ea">Fixed</div>
<svg class="ic" style="left:232px;top:86px" width="7" height="5" viewBox="0 0 7 5"><path d="M.8.800L3.500 3.500 6.200.8"/></svg>
<div class="hr" style="left:73px;top:95px;width:167px"></div>
<div class="pbtn" style="top:101px"><span>Make Conditional Region</span></div>
<div class="pbtn" style="top:121px"><span>Make Route</span></div>
<div class="pbtn" style="top:141px"><span>Make Data Detail</span></div>
<div class="pbtn" style="top:161px"><span>Make Data Iterator</span></div>
<div class="pbtn" style="top:181px"><span>Make Background Video</span></div>
<div class="hr" style="left:7px;top:225px;width:7px"></div>
<div class="t" style="left:21px;top:218px;font-size:10.500px;letter-spacing:1.150px;color:#c9ced8">LAYOUT</div>
<div class="hr" style="left:73px;top:225px;width:162px"></div>
<div class="t" style="left:37px;top:240px">Presets</div>
<svg class="abs" style="left:76px;top:240px" width="78" height="14" viewBox="0 0 78 14"><g fill="#c3c8d2"><path d="M0 0h20v3H0zM0 4.500h9.500V14H0zM10.500 4.500H20V14h-9.500z"/><path d="M29 0h20v3H29zM29 4.500h6V14h-6zM36 4.500h6V14h-6zM43 4.500h6V14h-6z"/><path d="M57 0h20v3H57zM57 4.500h4V14h-4zM62 4.500h10V14H62zM73 4.500h4V14h-4z"/></g></svg>
<div class="abs" style="left:175px;top:269px;width:14px;height:9px;border-radius:5px;border:1.500px solid #4b9cf0"></div>
<div class="t" style="left:193px;top:267px">Advanced</div>
</div>
<div id="split" class="abs"></div>
<div class="abs" style="left:45px;top:62px;width:1px;height:584px;background:#2b303b"></div>
<div id="bottombar" class="abs">
<svg class="ic" style="left:8px;top:6px" width="14" height="13" viewBox="0 0 15 14"><path d="M1 6.500A6.300 6.300 0 0 1 12.800 4M13.500.8V4.500H9.800M14 7.500A6.300 6.300 0 0 1 2.200 10M1.500 13.200V9.500h3.700"/></svg>
<div class="t" style="left:34px;top:5px;color:#c9ced8;transform:scaleX(.92)">Target: Development</div>
<svg class="abs" style="left:126px;top:10px" width="7" height="4" viewBox="0 0 7 4"><path d="M0 0h7L3.500 4z" fill="#aeb4c0"/></svg>
<div class="abs" style="left:137px;top:7px;width:10px;height:10px;border-radius:5px;background:#8fd43a"></div>
<div class="abs" style="left:150px;top:0;width:1px;height:24px;background:#2b303b"></div>
<svg class="ic" style="left:159px;top:6px;stroke:#4b9cf0;stroke-width:1.300" width="12" height="12" viewBox="0 0 12 12"><path d="M1 .8L11 6 1 11.200z"/></svg>
<svg class="ic" style="left:183px;top:5px" width="14" height="14" viewBox="0 0 14 14"><path d="M13 1v4.500H8.500M12.700 5.500A6 6 0 1 0 12.500 10"/></svg>
<svg class="ic" style="left:209px;top:5px" width="14" height="14" viewBox="0 0 14 14"><path d="M8.200 5.800L1.500 12.500a1 1 0 0 1-1.400-1.400L6.800 4.400A3.500 3.500 0 0 1 11 .8L9 2.800l.5 1.700 1.700.5 2-2a3.500 3.500 0 0 1-5 3.800z"/></svg>
<svg class="ic" style="left:235px;top:6px" width="13" height="13" viewBox="0 0 13 13"><circle cx="6.500" cy="6.500" r="5.800"/><path d="M4 6.700l1.800 1.800L9.200 4.800"/></svg>
<div class="abs" style="left:602px;top:0;width:1px;height:24px;background:#2b303b"></div>
<svg class="ic" style="left:613px;top:7px;stroke-width:1.400" width="11" height="10" viewBox="0 0 12 10"><path d="M.5 1h11M.5 5h11M.5 9h11"/></svg>
<div class="t" style="left:629px;top:5px;color:#c9ced8">Output</div>
<svg class="ic" style="left:669px;top:6px;stroke:#4b9cf0;stroke-width:1.300" width="15" height="12" viewBox="0 0 15 12"><path d="M1 1l5 5-5 5M8 11.300h6.500"/></svg>
<div class="t" style="left:689px;top:5px;color:#4b9cf0;transform:scaleX(.85)">Local Web Server</div>
<svg class="abs" style="left:770px;top:10px" width="7" height="4" viewBox="0 0 7 4"><path d="M0 0h7L3.500 4z" fill="#aeb4c0"/></svg>
<svg class="ic" style="left:791px;top:8px;stroke-width:1.300" width="9" height="9" viewBox="0 0 9 9"><path d="M.6.600l7.800 7.800M8.400.6L.6 8.400"/></svg>
<div class="abs" style="left:810px;top:0;width:1px;height:24px;background:#2b303b"></div>
<svg class="ic" style="left:820px;top:8px;stroke-width:1.300" width="12" height="9" viewBox="0 0 12 9"><path d="M.8 5l3.200 3.200L11.200.8"/></svg>
<div class="t" style="left:836px;top:5px;color:#c9ced8;transform:scaleX(.85)">System Check</div>
<div class="abs" style="left:901px;top:0;width:1px;height:24px;background:#2b303b"></div>
<svg class="ic" style="left:909px;top:6px" width="14" height="12" viewBox="0 0 14 12"><path d="M5 11.200L.9 7.100a.8.800 0 0 1 0-1.100L6.200.7a.8.800 0 0 1 1.100 0l5.200 5.200a.8.800 0 0 1 0 1.100L8.400 11.200zM3.200 3.800l5.500 5.500M8.400 11.200h5"/></svg>
<svg class="ic" style="left:935px;top:5px;stroke-width:1.100" width="13" height="14" viewBox="0 0 13 14"><path d="M4.200 4a2.300 2.300 0 0 1 4.600 0M3.500 4h6v5.500a3 3 0 0 1-6 0zM6.500 4v8.500M3.500 6H.8M3.500 9H.8M9.500 6h2.700M9.500 9h2.700M3.800 11.500L1.500 13.200M9.200 11.500l2.300 1.700M4 1l.8 1M9 1l-.8 1"/></svg>
<div class="abs" style="left:958px;top:0;width:1px;height:24px;background:#2b303b"></div>
<svg class="ic" style="left:968px;top:8px;stroke-width:1.300" width="11" height="7" viewBox="0 0 11 7"><path d="M.8 6.200L5.500 1.500l4.700 4.700"/></svg>
</div>
<div id="popup" class="abs">
<div class="abs" style="left:0;top:0;width:560px;height:25px;background:#353b47;border-bottom:1px solid #2b303b"></div>
<div class="t" style="left:242px;top:6px;color:#4b9cf0">Elements</div>
<div class="t" style="left:290px;top:6px;color:#dfe3ea">Blocks</div>
<div class="t" style="left:175px;top:29px;font-size:11px;color:#7d8594">Search</div>
<div class="abs" style="left:175px;top:44px;width:238px;height:2px;background:#4a7fb8"></div>
<div class="t" style="left:421px;top:30px;color:#4b9cf0;transform:scaleX(.8)">BS5</div>
<div class="t" style="left:446px;top:30px;color:#4b9cf0;transform:scaleX(.82)">AC</div>
<div class="t" style="left:467px;top:30px;color:#4b9cf0;transform:scaleX(.82)">FA</div>
<svg class="abs" style="left:489px;top:31px" width="14" height="12" viewBox="0 0 14 12"><path d="M0 0h6.500v5.500H0zM7.500 0H14v5.500H7.500zM0 6.500h6.500V12H0zM7.500 6.500H14V12H7.500z" fill="#c3c8d2"/></svg>
<svg class="abs" style="left:513px;top:31px" width="14" height="12" viewBox="0 0 14 12"><path d="M0 0h4v3.300H0zM5 0h4v3.300H5zM10 0h4v3.300h-4zM0 4.300h4v3.300H0zM5 4.300h4v3.300H5zM10 4.300h4v3.300h-4zM0 8.700h4V12H0zM5 8.700h4V12H5zM10 8.700h4V12h-4z" fill="#4b9cf0"/></svg>
<svg class="abs" style="left:537px;top:31px" width="14" height="12" viewBox="0 0 14 12"><path d="M0 0h2.500v2.500H0zM0 4.700h2.500v2.500H0zM0 9.400h2.500v2.500H0zM4 .5h10v1.600H4zM4 5.200h10v1.600H4zM4 9.900h10v1.600H4z" fill="#c3c8d2"/></svg>
<div class="abs" style="left:160px;top:48px;width:7px;height:312px;background:#373d4a"></div>
<div class="abs" style="left:167px;top:48px;width:393px;height:312px;background:#282c36"></div>
<div class="li sel" style="top:50px"><svg style="left:18px;top:7px" width="14" height="9" viewBox="0 0 17 11"><path d="M0 2.500h3.500v7H0z" fill="#dbe7f5"/><path d="M4.500 2.500c1.500-1.200 3-2 4.500-2h7.200a.9.900 0 0 1 0 2.800H10.500c1.200 0 1.800.5 1.800 1.300s-.5 1.200-1.200 1.300c.5.200.8.600.8 1.200s-.5 1.100-1.200 1.200c.3.200.5.500.5 1 0 .8-.7 1.200-1.500 1.200H7c-1 0-1.800-.4-2.500-1z" fill="#dbe7f5"/></svg><div class="lab">Suggested</div><div class="bdg">10</div></div>
<div class="li" style="top:73px"><div class="abs" style="left:19px;top:3px;font-size:17px;line-height:17px;font-weight:bold;color:#e9b571;letter-spacing:0">A</div><div class="lab">Content</div><div class="bdg">22</div></div>
<div class="li" style="top:96px"><svg style="left:20px;top:4px" width="11" height="14" viewBox="0 0 12 16"><path d="M0 1a1 1 0 0 1 1-1h6.500L12 4.500V15a1 1 0 0 1-1 1H1a1 1 0 0 1-1-1z" fill="#4db1b8"/><path d="M7.500 0L12 4.500H7.500z" fill="#8fe0e6"/><path d="M2.500 8h7v1h-7zM2.500 10.500h7v1h-7zM2.500 13h7v1h-7z" fill="#2f7a80"/></svg><div class="lab">Forms</div><div class="bdg">23</div></div>
<div class="li" style="top:119px"><svg style="left:19px;top:6px" width="13" height="11" viewBox="0 0 14 12"><path d="M0 0h2.500v2.500H0zM0 4.700h2.500v2.500H0zM0 9.400h2.500v2.500H0z" fill="#5aa9ea"/><path d="M4.500.3h9.500v2H4.500zM4.500 5h9.500v2H4.500zM4.500 9.700h9.500v2H4.500z" fill="#4a88c2"/></svg><div class="lab">Lists</div><div class="bdg">5</div></div>
<div class="li" style="top:142px"><svg style="left:18px;top:5px" width="16" height="13" viewBox="0 0 16 13"><rect width="16" height="13" rx="1.500" fill="#c87be0"/><rect y="0" width="16" height="2" fill="#7d4a8d"/><circle cx="5" cy="6" r="1.700" fill="#4a2a55"/><path d="M2 11c0-2 1.300-3 3-3s3 1 3 3z" fill="#4a2a55"/><path d="M10 5h4v1h-4zM10 7.200h4v1h-4zM10 9.400h4v1h-4z" fill="#7d4a8d"/></svg><div class="lab">Cards</div><div class="bdg">2</div></div>
<div class="li" style="top:165px"><svg style="left:19px;top:5px" width="13.500" height="13.500" viewBox="0 0 15 15"><circle cx="7.500" cy="7.500" r="7.500" fill="#e0a66b"/><path d="M10.800 4.200L8.700 8.700 4.200 10.800 6.300 6.300z" fill="#4a3018"/><circle cx="7.500" cy="7.500" r=".9" fill="#e0a66b"/></svg><div class="lab">Navigation</div><div class="bdg">1</div></div>
<div class="li" style="top:188px"><svg style="left:19px;top:9.500px" width="13.500" height="4.200" viewBox="0 0 16 5"><circle cx="2.500" cy="2.500" r="2.300" fill="#5aa9ea"/><circle cx="8" cy="2.500" r="2.300" fill="#5aa9ea"/><circle cx="13.500" cy="2.500" r="2.300" fill="#5aa9ea"/></svg><div class="lab">Pagination</div><div class="bdg">3</div></div>
<div class="li" style="top:211px"><svg style="left:18px;top:6px" width="16" height="11.500" viewBox="0 0 18 13"><path d="M5 2.500L1.500 6.500 5 10.500M13 2.500l3.500 4L13 10.500M10.500 1l-3 11" fill="none" stroke="#c277d4" stroke-width="2.200" stroke-linecap="round" stroke-linejoin="round"/></svg><div class="lab">Animation</div><div class="bdg">4</div></div>
<div class="li" style="top:234px"><svg style="left:20px;top:4px" width="12" height="14" viewBox="0 0 13 16"><ellipse cx="6.500" cy="3" rx="6.500" ry="3" fill="#63c9d0"/><path d="M0 4.800c0 1.500 2.800 2.800 6.500 2.800S13 6.300 13 4.800V8c0 1.500-2.800 2.800-6.500 2.800S0 9.500 0 8z" fill="#4db1b8"/><path d="M0 9.800c0 1.500 2.800 2.800 6.500 2.800S13 11.300 13 9.800V13c0 1.600-2.800 3-6.500 3S0 14.600 0 13z" fill="#4db1b8"/></svg><div class="lab">Data</div><div class="bdg">19</div></div>
<div class="li" style="top:257px"><svg style="left:19px;top:4px" width="14" height="14.500" viewBox="0 0 15 16"><path d="M7.500 0L15 3.500v9L7.500 16 0 12.500v-9z" fill="#f0c56e"/><path d="M7.500 7.200L15 3.500v9L7.500 16z" fill="#c99a45"/><path d="M7.500 0L15 3.500 7.500 7.200 0 3.500z" fill="#f7dc9a"/><path d="M4 2l7.500 3.600v3l-2 1V6.700L2 3z" fill="#8a6a2a" opacity=".55"/></svg><div class="lab">Components</div><div class="bdg">20</div></div>
<div class="li" style="top:280px"><svg style="left:18px;top:4px" width="17" height="15" viewBox="0 0 17 15"><path d="M3 3h11M6 3l3 8" fill="none" stroke="#b5875a" stroke-width="1.500"/><rect x="0" y="0" width="5.500" height="5.500" rx="1" fill="#e0a66b"/><rect x="11.500" y="0" width="5.500" height="5.500" rx="1" fill="#e0a66b"/><rect x="6.500" y="9" width="5.500" height="5.500" rx="1" fill="#e0a66b"/></svg><div class="lab">Workflows</div><div class="bdg">2</div></div>
<div class="li" style="top:303px"><svg style="left:21px;top:4px" width="10" height="14.500" viewBox="0 0 11 16"><path d="M2 0h1.800v4H2zM7.200 0H9v4H7.200z" fill="#63c9d0"/><path d="M0 4h11v2.500C11 9.500 9 11 6.500 11.300V16h-2v-4.700C2 11 0 9.500 0 6.500z" fill="#4db1b8"/></svg><div class="lab">Sockets</div><div class="bdg">1</div></div>
<div class="li" style="top:326px"><svg style="left:20px;top:4px" width="12" height="14" viewBox="0 0 13 16"><ellipse cx="6.500" cy="3" rx="6.500" ry="3" fill="#63c9d0"/><path d="M0 4.800c0 1.500 2.800 2.800 6.500 2.800S13 6.300 13 4.800V8c0 1.500-2.800 2.800-6.500 2.800S0 9.500 0 8z" fill="#4db1b8"/><path d="M0 9.800c0 1.500 2.800 2.800 6.500 2.800S13 11.300 13 9.800V13c0 1.600-2.800 3-6.500 3S0 14.600 0 13z" fill="#4db1b8"/></svg><div class="lab">State Management</div><div class="bdg">4</div></div>
<div class="li" style="top:349px"><div class="abs" style="left:20px;top:2px;font-size:17px;line-height:17px;font-weight:bold;color:#c9ced8;letter-spacing:0">S</div><div class="lab">String</div><div class="bdg">15</div></div>
<div class="abs" style="left:170px;top:52px;width:87px;height:66px;border:2px solid #d0181c"></div>
<div class="bs5" style="left:176px;top:59px">BS5</div>
<div class="glab" style="left:168px;top:100px">Row</div>
<div class="bs5" style="left:273px;top:59px">BS5</div>
<div class="glab" style="left:266px;top:100px">Flex Container</div>
<div class="bs5" style="left:370px;top:59px">BS5</div>
<div class="glab" style="left:362px;top:100px">Button</div>
<div class="bs5" style="left:466px;top:59px">BS5</div>
<div class="glab" style="left:459px;top:100px">Header</div>
<div class="bs5" style="left:176px;top:126px">BS5</div>
<div class="glab" style="left:168px;top:166px">Section</div>
<div class="bs5" style="left:273px;top:126px">BS5</div>
<div class="glab" style="left:266px;top:166px">Footer</div>
<div class="bs5" style="left:370px;top:126px">BS5</div>
<div class="glab" style="left:362px;top:166px">Alert</div>
<div class="bs5" style="left:466px;top:126px">BS5</div>
<div class="glab" style="left:459px;top:166px">Form</div>
<div class="bs5" style="left:176px;top:192px">BS5</div>
<div class="glab" style="left:168px;top:233px">Dynamic Modal</div>
<div class="bs5" style="left:273px;top:192px">BS5</div>
<div class="glab" style="left:266px;top:233px">Dynamic Offcanvas</div>
<svg class="abs" style="left:199px;top:74px" width="37" height="12" viewBox="0 0 37 12"><circle cx="6" cy="6" r="5.500" fill="#5aa9ea"/><circle cx="18.500" cy="6" r="5.500" fill="#4a7baa"/><circle cx="31" cy="6" r="5.500" fill="#5aa9ea"/></svg>
<svg class="abs" style="left:296px;top:61px" width="38" height="38" viewBox="0 0 38 38"><path d="M19 6v26M6 19h26" stroke="#4a7baa" stroke-width="4.500" fill="none"/><path d="M13 9l6-6 6 6M13 29l6 6 6-6M9 13l-6 6 6 6M29 13l6 6-6 6" fill="none" stroke="#5aa9ea" stroke-width="3.600" stroke-linecap="round" stroke-linejoin="round"/></svg>
<svg class="abs" style="left:395px;top:64px" width="33" height="33" viewBox="0 0 33 33"><rect width="33" height="33" rx="4" fill="#3b7a80"/><rect x="5" y="5" width="23" height="23" fill="#52b5bd"/></svg>
<svg class="abs" style="left:490px;top:64px" width="38" height="33" viewBox="0 0 38 33"><rect width="38" height="33" rx="4" fill="#5aa9ea"/><rect x="5" y="5" width="28" height="7" fill="#4a7baa"/></svg>
<svg class="abs" style="left:205px;top:132px" width="26" height="28" viewBox="0 0 26 28"><path d="M3 3l10 8.500L23 3" fill="none" stroke="#4a7baa" stroke-width="5" stroke-linecap="round" stroke-linejoin="round"/><path d="M3 15l10 9L23 15" fill="none" stroke="#5aa9ea" stroke-width="5" stroke-linecap="round" stroke-linejoin="round"/></svg>
<svg class="abs" style="left:296px;top:130px" width="38" height="33" viewBox="0 0 38 33"><rect width="38" height="33" rx="4" fill="#5aa9ea"/><rect x="5" y="21" width="28" height="7" fill="#4a7baa"/></svg>
<svg class="abs" style="left:393px;top:128px" width="37" height="37" viewBox="0 0 37 37"><circle cx="18.500" cy="18.500" r="18.500" fill="#a68a5b"/><path d="M16 8.500h5l-.9 13.500h-3.200z" fill="#f0c674"/><circle cx="18.500" cy="26.300" r="2.500" fill="#f0c674"/></svg>
<svg class="abs" style="left:494px;top:128px" width="28" height="37" viewBox="0 0 28 37"><path d="M0 2a2 2 0 0 1 2-2h17l9 9v26a2 2 0 0 1-2 2H2a2 2 0 0 1-2-2z" fill="#3b7a80"/><path d="M19 0l9 9h-9z" fill="#6fd0d8"/><path d="M7 16.500h14v2H7zM7 21h14v2H7zM7 25.500h14v2H7z" fill="#5fc4cc"/></svg>
<svg class="abs" style="left:198px;top:193px" width="39" height="40" viewBox="0 0 39 40"><rect x="10" y="0" width="28.500" height="28" rx="4" fill="#8f7a57"/><rect x=".5" y="10" width="29" height="29" rx="4" fill="#ecc479" stroke="#23262d" stroke-width="1"/><rect x="5" y="15.500" width="19" height="4.500" fill="#2d2f33"/></svg>
<svg class="abs" style="left:297px;top:193px" width="35" height="40" viewBox="0 0 35 40"><rect x=".5" y=".5" width="33.500" height="38.500" rx="4" fill="#ecc479" stroke="#23262d" stroke-width="1"/><rect x="5" y="5" width="7.500" height="29" fill="#8f7a57"/></svg>
</div>
</body>
</html>
